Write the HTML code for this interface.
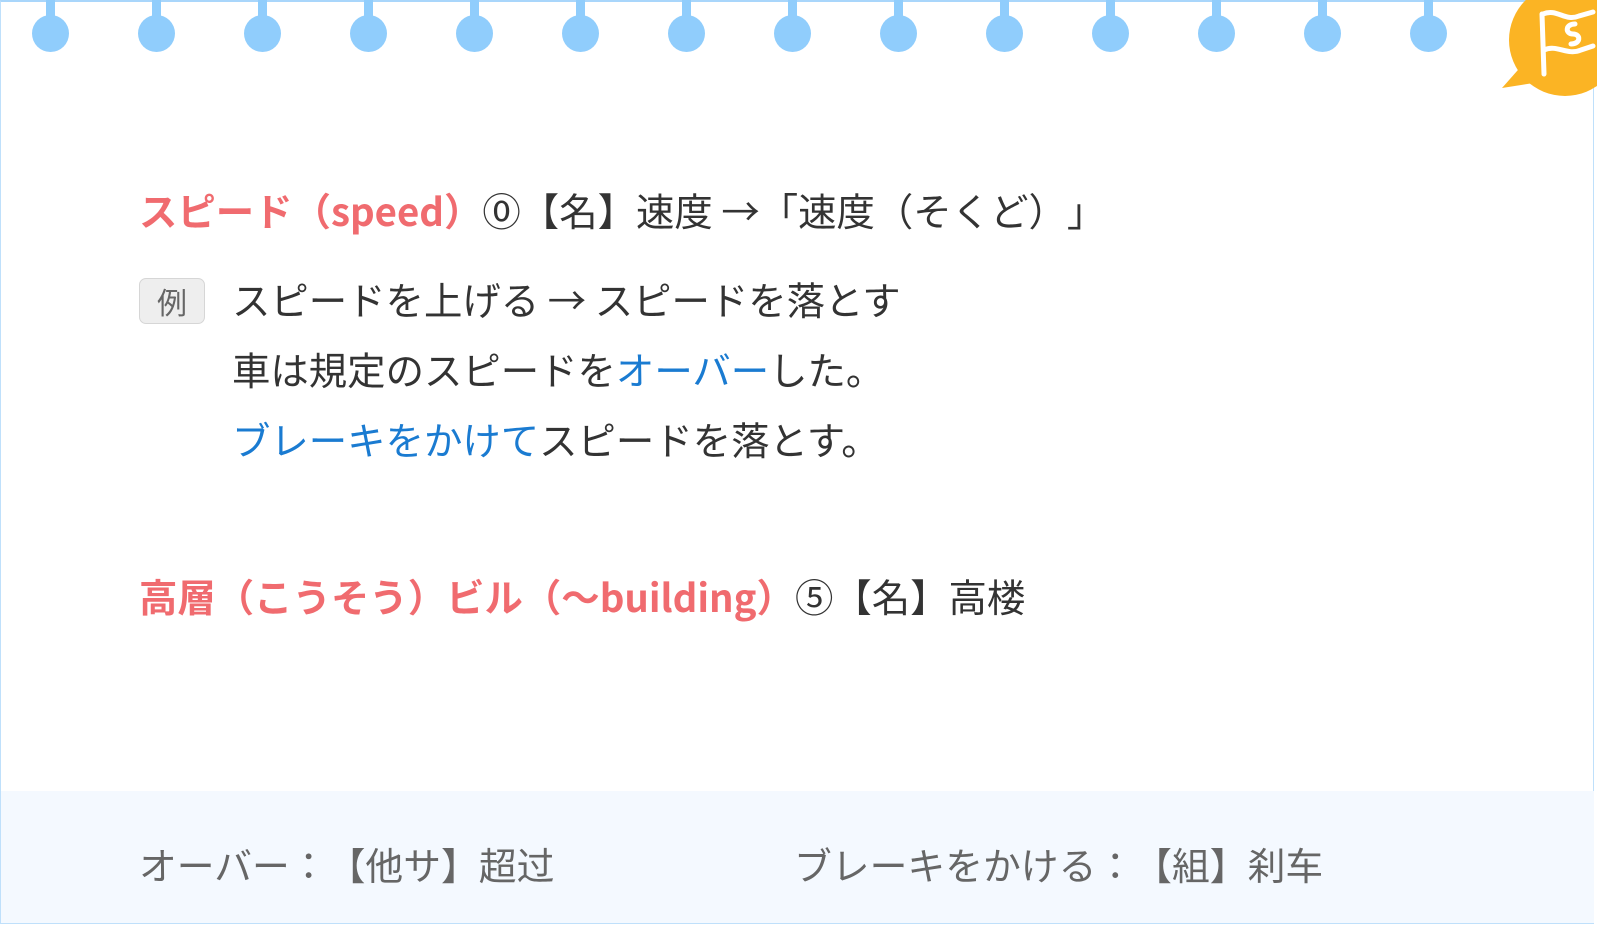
<!DOCTYPE html>
<html><head><meta charset="utf-8"><style>
body{margin:0;width:1597px;height:926px;overflow:hidden;background:#fff;font-family:"Noto Sans CJK JP","Liberation Sans",sans-serif;position:relative;text-spacing-trim:space-all}
.card{position:absolute;left:0;top:0;width:1594px;height:924px;border:1px solid #bfe0fb;border-top:2px solid #a9d6fb;box-sizing:border-box}
.ring{position:absolute;top:0;width:37px;height:52px}
.ring:before{content:"";position:absolute;left:14px;top:0;width:9px;height:20px;background:#90cdfc}
.ring:after{content:"";position:absolute;left:0;top:15px;width:37px;height:37px;border-radius:50%;background:#90cdfc}
.t{position:absolute;font-size:38.4px;color:#333;white-space:nowrap;line-height:1;text-spacing-trim:space-all}
.r{color:#f06b6f;font-weight:bold}
.b{color:#1a7bd1}
.badge{position:absolute;left:139px;top:278px;width:66px;height:46px;border:1px solid #d6d6d6;border-radius:7px;background:#eee;color:#666;font-size:30px;text-align:center;line-height:44px;box-sizing:border-box}
.bottom{position:absolute;left:1px;top:791px;width:1593px;height:132px;background:#f4f9ff}
.g{color:#666;font-size:37.8px}
</style></head><body>
<div class="card"></div>
<div id="rings"></div>
<svg style="position:absolute;left:1495px;top:0" width="102" height="100" viewBox="0 0 102 100">
<circle cx="70" cy="40" r="56" fill="#fbb424"/>
<polygon points="7,88 30,62 45,82" fill="#fbb424"/>
<path d="M49 74 L47 14 M48 14 C62 8 70 22 84 16 L98 12 M49 50 C62 44 72 56 86 50 L98 46 M80 24 C70 24 70 34 78 34 C86 34 86 44 76 44" stroke="#fff" stroke-width="5" fill="none" stroke-linecap="round"/>
</svg>
<div class="t" style="left:139px;top:191px"><span class="r">スピード（speed）</span>⓪【名】速度 →「速度（そくど）」</div>
<div class="badge">例</div>
<div class="t" style="left:232px;top:280px">スピードを上げる → スピードを落とす</div>
<div class="t" style="left:232px;top:350px">車は規定のスピードを<span class="b">オーバー</span>した。</div>
<div class="t" style="left:232px;top:420px"><span class="b">ブレーキをかけて</span>スピードを落とす。</div>
<div class="t" style="left:139px;top:577px"><span class="r">高層（こうそう）ビル（〜building）</span>⑤【名】高楼</div>
<div class="bottom"></div>
<div class="t g" style="left:139px;top:845px">オーバー：【他サ】超过</div>
<div class="t g" style="left:794px;top:845px">ブレーキをかける：【組】刹车</div>
<script>
var h='';for(var i=0;i<14;i++){h+='<div class="ring" style="left:'+(32+i*106)+'px"></div>';}
document.getElementById('rings').innerHTML=h;
</script>
</body></html>
